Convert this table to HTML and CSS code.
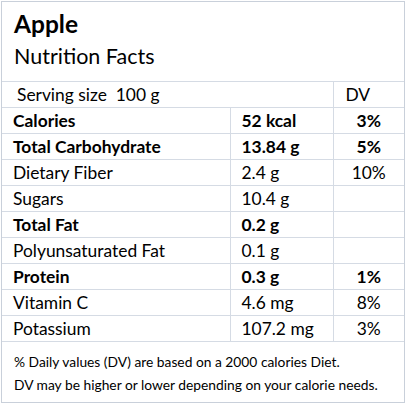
FILE: index.html
```html
<!DOCTYPE html>
<html lang="en">
<head>
    <meta charset="UTF-8">
    <title>Apple Nutrition Facts</title>
    <link rel="stylesheet" href="styles.css">
</head>
<body>
    <div class="label">
        <div class="header">
            <div class="food">Apple</div>
            <div class="subtitle">Nutrition Facts</div>
        </div>

        <table class="facts">
            <colgroup>
                <col class="col-name">
                <col class="col-amount">
                <col class="col-dv">
            </colgroup>
            <tr class="serving">
                <td colspan="2">Serving size&nbsp; 100 g</td>
                <td class="dv-head">DV</td>
            </tr>
            <tr class="main">
                <td>Calories</td>
                <td>52 kcal</td>
                <td class="dv">3%</td>
            </tr>
            <tr class="main">
                <td>Total Carbohydrate</td>
                <td>13.84 g</td>
                <td class="dv">5%</td>
            </tr>
            <tr>
                <td>Dietary Fiber</td>
                <td>2.4 g</td>
                <td class="dv">10%</td>
            </tr>
            <tr>
                <td>Sugars</td>
                <td>10.4 g</td>
                <td class="dv"></td>
            </tr>
            <tr class="main">
                <td>Total Fat</td>
                <td>0.2 g</td>
                <td class="dv"></td>
            </tr>
            <tr>
                <td>Polyunsaturated Fat</td>
                <td>0.1 g</td>
                <td class="dv"></td>
            </tr>
            <tr class="main">
                <td>Protein</td>
                <td>0.3 g</td>
                <td class="dv">1%</td>
            </tr>
            <tr>
                <td>Vitamin C</td>
                <td>4.6 mg</td>
                <td class="dv">8%</td>
            </tr>
            <tr>
                <td>Potassium</td>
                <td>107.2 mg</td>
                <td class="dv">3%</td>
            </tr>
        </table>

        <div class="note">
            <p>% Daily values (DV) are based on a 2000 calories Diet.</p>
            <p>DV may be higher or lower depending on your calorie needs.</p>
        </div>
    </div>
</body>
</html>
```

FILE: styles.css
```css
body {
    margin: 0;
    padding: 1px;
    background-color: white;
    color: black;
    font-family: Lato, "Open Sans", sans-serif;
}

.label {
    width: 404px;
    height: 402px;
    border: 1px solid #c9d0da;
    box-sizing: border-box;
}

.header {
    height: 79px;
    padding: 8px 0 0 12px;
    box-sizing: border-box;
}

.food {
    font-size: 24.5px;
    font-weight: bold;
    line-height: 28px;
}

.subtitle {
    font-size: 21.5px;
    line-height: 30px;
    margin-top: 3px;
}

.facts {
    width: 100%;
    border-collapse: collapse;
    font-size: 17.4px;
}

.col-name {
    width: 228px;
}

.col-amount {
    width: 103px;
}

.facts td {
    height: 25px;
    padding: 0 0 0 11px;
    border: 1px solid #d5dbe4;
    line-height: 24px;
}

.facts td:first-child {
    border-left: none;
}

.facts td:last-child {
    border-right: none;
}

.serving td:first-child {
    padding-left: 15px;
}

.main td {
    font-weight: bold;
}

.facts td.dv {
    text-align: center;
    padding: 0;
}

.facts td.dv-head {
    padding-left: 12px;
}

.note {
    padding: 8px 0 0 12px;
    font-size: 13.8px;
}

.note p {
    margin: 0;
    line-height: 23px;
}
```
